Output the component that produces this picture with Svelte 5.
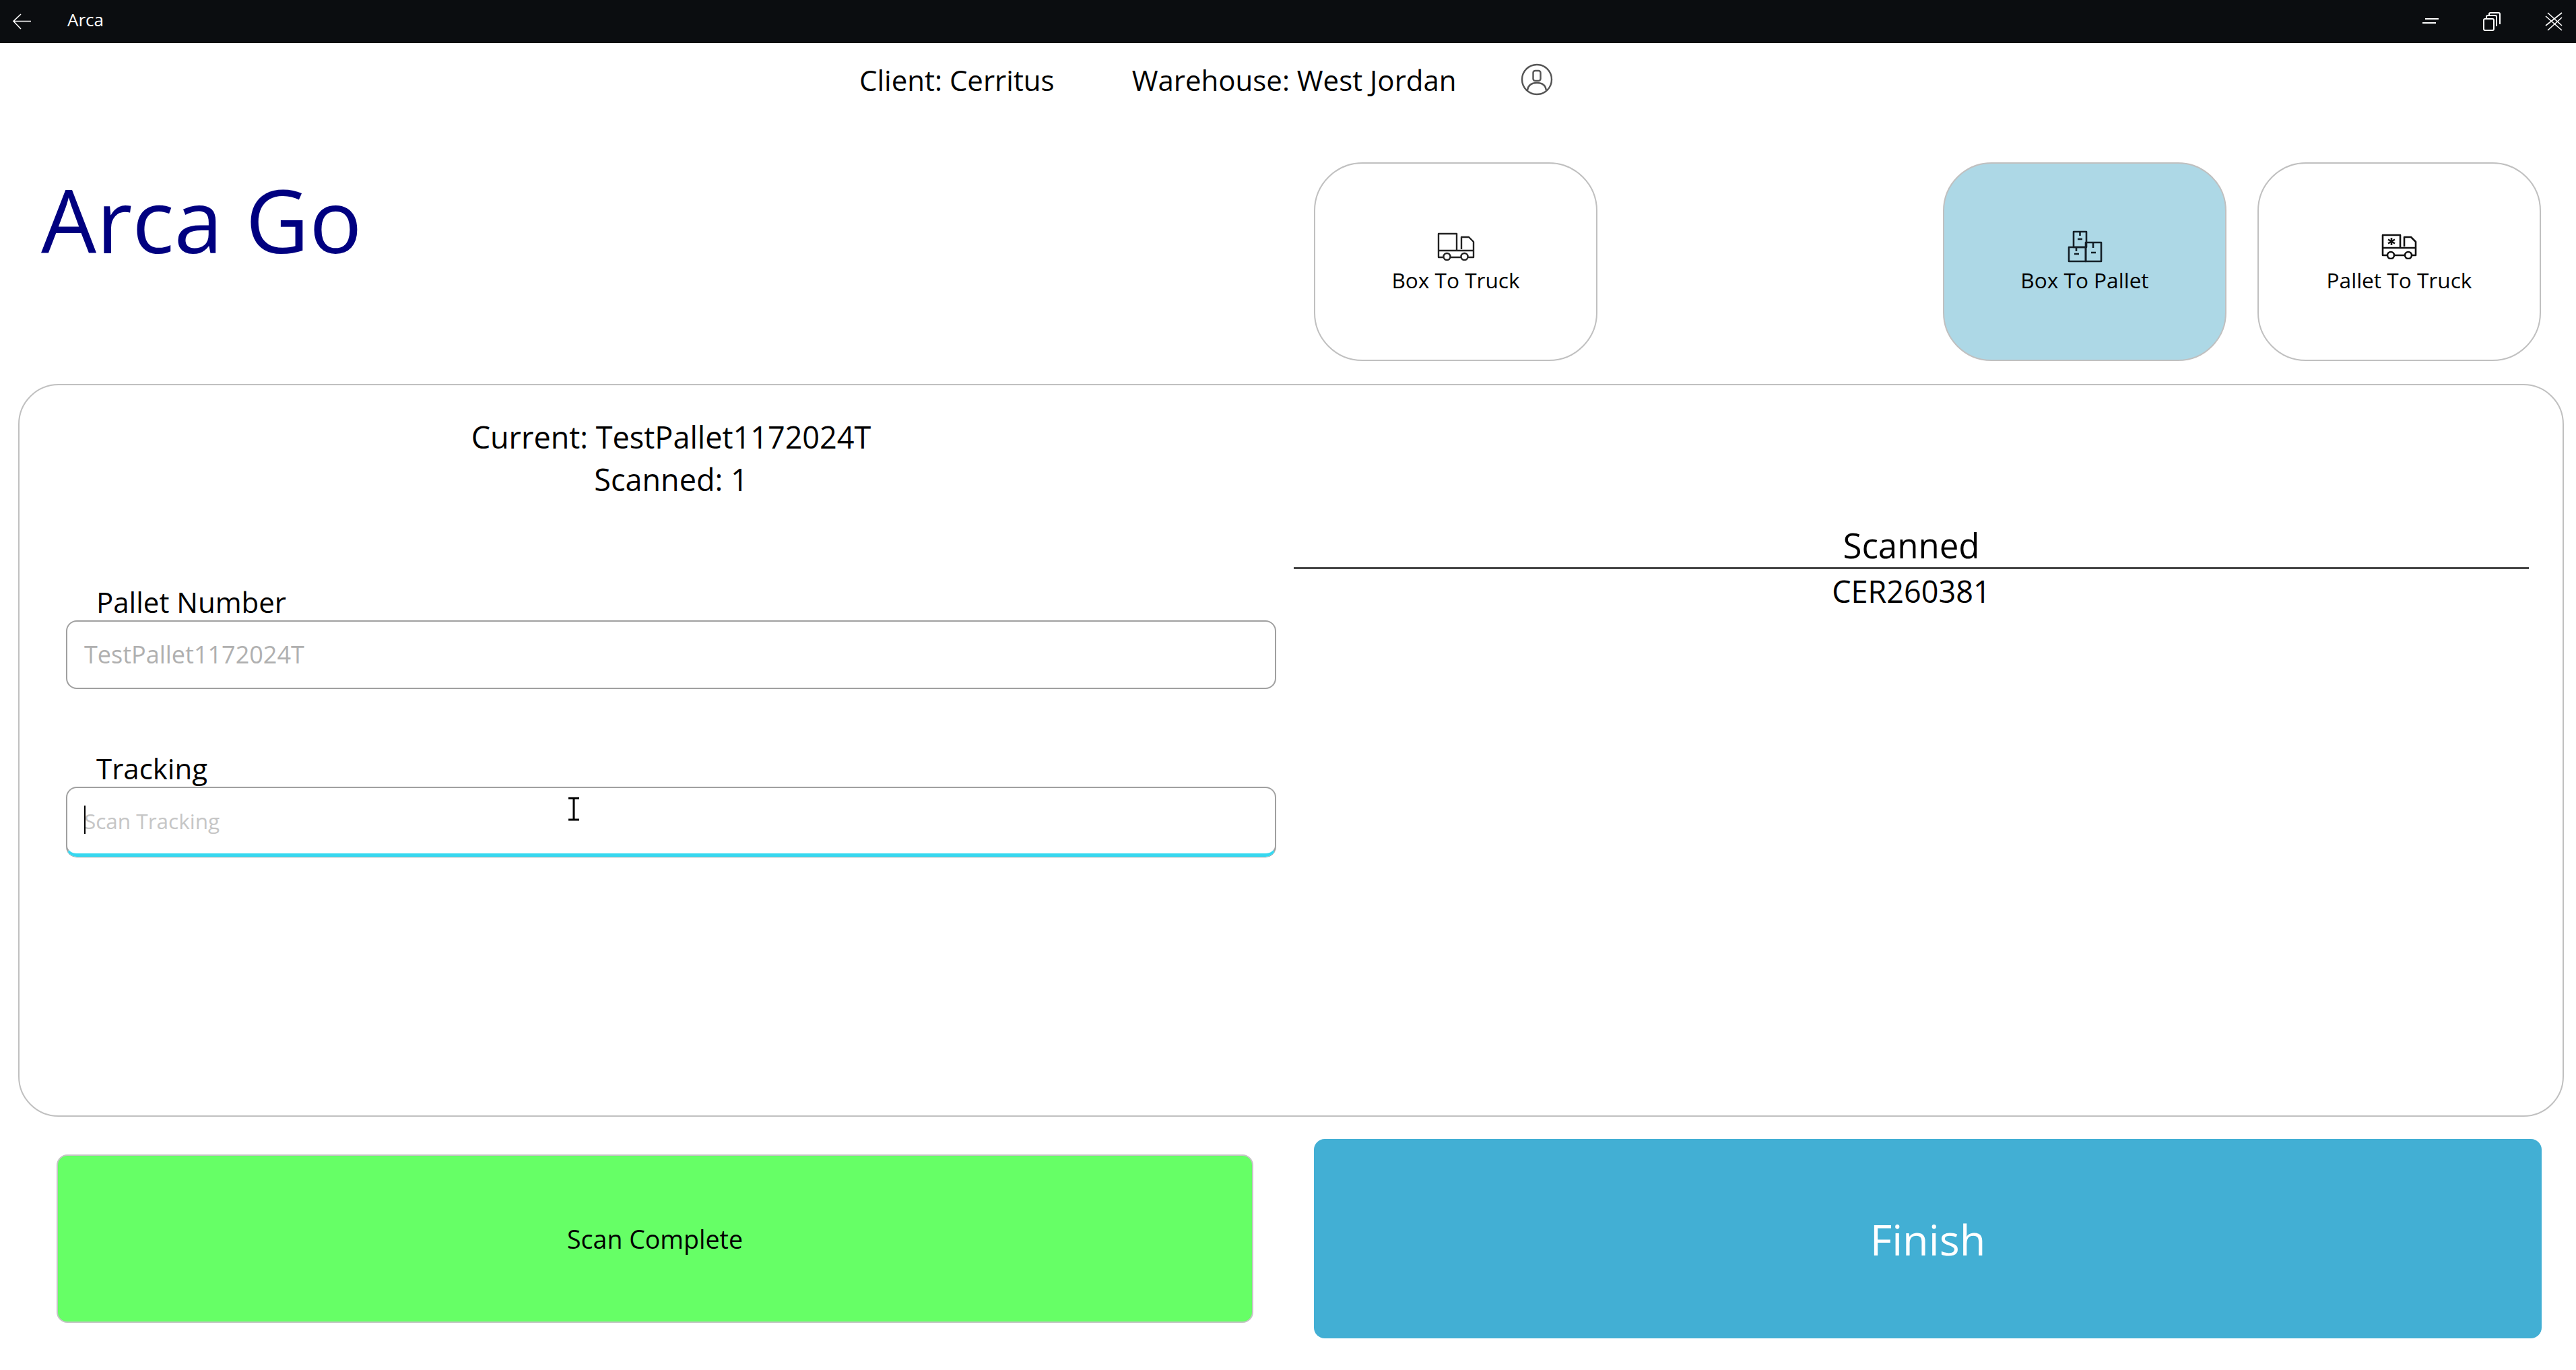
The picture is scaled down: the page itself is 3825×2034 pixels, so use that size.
<script lang="ts">
  let pallet = "TestPallet1172024T";
  let scanned = ["CER260381"];
</script>

<div class="app">
  <div class="titlebar">
    <svg class="back" width="28" height="24" viewBox="0 0 28 24" fill="none" stroke="#fff" stroke-width="1.6">
      <path d="M1 11.500h26M12 1 1 11.500 12 23" />
    </svg>
    <span class="app-name">Arca</span>
    <div class="win-controls">
      <svg width="24" height="12" viewBox="0 0 24 12" stroke="#fff" stroke-width="2">
        <path d="M4 2h20M0 8h20" />
      </svg>
      <svg width="26" height="28" viewBox="0 0 26 28" fill="none" stroke="#fff" stroke-width="2">
        <rect x="1" y="10" width="15" height="17" rx="2" />
        <path d="M5 9V7q0-2 2-2h11q2 0 2 2v14M9 4V3q0-2 2-2h12q2 0 2 2v15" />
      </svg>
      <svg width="26" height="28" viewBox="0 0 26 28" stroke="#fff" stroke-width="2">
        <path d="M1 20 25 1M1 6l24 21M4 27 25 8M4 1l21 19" stroke-width="1.6" />
      </svg>
    </div>
  </div>

  <div class="info-row">
    <span class="client">Client: Cerritus</span>
    <span class="warehouse">Warehouse: West Jordan</span>
    <svg class="user" width="48" height="48" viewBox="0 0 48 48" fill="none" stroke="#555" stroke-width="2.4">
      <circle cx="24" cy="24" r="22" />
      <rect x="18.500" y="11" width="11" height="15" rx="3" />
      <path d="M10 40c1-7 6-11 14-11s13 4 14 11" />
    </svg>
  </div>

  <div class="mode-row">
    <h1>Arca Go</h1>
    <button class="mode">
      <span class="icon-slot">
        <svg width="56" height="42" viewBox="0 0 56 42" fill="none" stroke="#222" stroke-width="2.4" stroke-linejoin="round">
          <path d="M2 27V2h27v25M36 25V7h11l7 7v13M2 27h52M2 27v10h7M20 37h15M46 37h8V27" />
          <circle cx="14.500" cy="36" r="5" />
          <circle cx="40.500" cy="36" r="5" />
        </svg>
      </span>
      Box To Truck
    </button>
    <div></div>
    <button class="mode active">
      <span class="icon-slot">
        <svg width="52" height="48" viewBox="0 0 52 48" fill="none" stroke="#152028" stroke-width="2.6" stroke-linejoin="round">
          <rect x="9" y="2" width="19" height="23" />
          <rect x="2" y="25" width="25" height="21" />
          <rect x="27" y="18" width="23" height="28" />
          <path d="M18.500 2v6M15 13h7M13 25v6M10 35h7M38 18v8M35 33h7" />
        </svg>
      </span>
      Box To Pallet
    </button>
    <button class="mode">
      <span class="icon-slot">
        <svg width="54" height="38" viewBox="0 0 54 38" fill="none" stroke="#111" stroke-width="2.6" stroke-linejoin="round">
          <path d="M2 21V2h26v19M34 19V5h10l7 7v9M2 21h49M2 21v11h6M20 32h14M46 32h5V21" />
          <path d="M15 6v11M10 8.500l10 6M20 8.500l-10 6" />
          <circle cx="14" cy="32" r="5" />
          <circle cx="40" cy="32" r="5" />
        </svg>
      </span>
      Pallet To Truck
    </button>
  </div>

  <div class="panel">
    <div class="left">
      <div class="status">
        <div>Current: {pallet}</div>
        <div>Scanned: {scanned.length}</div>
      </div>
      <div class="field">
        <span class="label">Pallet Number</span>
        <div class="input">{pallet}</div>
      </div>
      <div class="field second">
        <span class="label">Tracking</span>
        <div class="input focused"><i class="caret"></i>Scan Tracking
          <svg class="ibeam" width="20" height="36" viewBox="0 0 20 36" fill="none" stroke="#000" stroke-width="3">
            <path d="M2 2h16M2 34h16M10 2v32" />
          </svg>
        </div>
      </div>
    </div>
    <div class="right">
      <div class="list-head">Scanned</div>
      {#each scanned as code}
        <div class="list-item">{code}</div>
      {/each}
    </div>
  </div>

  <div class="actions">
    <button class="complete">Scan Complete</button>
    <button class="finish">Finish</button>
  </div>
</div>

<style>
  :global(body) {
    margin: 0;
    background: #fff;
  }
  .app {
    width: 3825px;
    height: 2034px;
    overflow: hidden;
    font-family: "Open Sans", sans-serif;
    color: #000;
    display: flex;
    flex-direction: column;
  }
  .titlebar {
    height: 64px;
    background: #0b0d10;
    color: #fff;
    display: flex;
    align-items: center;
    padding-left: 19px;
    flex-shrink: 0;
  }
  .back {
    margin-right: 53px;
  }
  .app-name {
    font-size: 26px;
    margin-top: -6px;
  }
  .win-controls {
    margin-left: auto;
    margin-right: 20px;
    display: flex;
    align-items: center;
    gap: 66px;
  }
  .info-row {
    height: 108px;
    display: flex;
    align-items: center;
    padding-left: 1276px;
    font-size: 42px;
    flex-shrink: 0;
  }
  .client {
    margin-right: 115px;
  }
  .warehouse {
    margin-right: 95px;
  }
  .mode-row {
    display: grid;
    grid-template-columns: 421px 421px 421px 421px;
    column-gap: 46px;
    padding-left: 1951px;
    height: 295px;
    margin-top: 69px;
    position: relative;
    flex-shrink: 0;
  }
  h1 {
    position: absolute;
    left: 61px;
    top: -4px;
    margin: 0;
    font-size: 130px;
    font-weight: 400;
    line-height: 178px;
    color: #000080;
  }
  .mode {
    height: 295px;
    border: 2px solid #c0c0c0;
    border-radius: 72px;
    background: #fff;
    font: inherit;
    font-size: 31.600px;
    color: #000;
    display: flex;
    flex-direction: column;
    align-items: center;
    justify-content: center;
    gap: 3px;
    padding: 0;
  }
  .mode.active {
    background: #add8e6;
  }
  .icon-slot {
    height: 50px;
    display: flex;
    align-items: center;
  }
  .panel {
    margin: 34px 18px 0 27px;
    height: 1088px;
    box-sizing: border-box;
    border: 2px solid #c0c0c0;
    border-radius: 60px;
    display: grid;
    grid-template-columns: 1866px 1fr;
    flex-shrink: 0;
  }
  .left {
    padding: 45px 0 0 69px;
    width: 1797px;
    box-sizing: content-box;
  }
  .status {
    text-align: center;
    font-size: 45px;
    line-height: 63px;
    margin-bottom: 124px;
  }
  .field {
    display: flex;
    flex-direction: column;
  }
  .field.second {
    margin-top: 91px;
  }
  .label {
    font-size: 42px;
    line-height: 54px;
    padding-left: 45px;
  }
  .input {
    position: relative;
    height: 102px;
    box-sizing: border-box;
    border: 2px solid #a0a0a0;
    border-radius: 16px;
    font-size: 36px;
    color: #b0b0b0;
    display: flex;
    align-items: center;
    padding-left: 25px;
    padding-bottom: 2px;
  }
  .input.focused {
    height: 104px;
    border-bottom: 5px solid #36d8f0;
    box-shadow: 0 1px 0 #8aa4aa;
    color: #c6c6c6;
    font-size: 31.500px;
    padding-bottom: 0;
  }
  .caret {
    position: absolute;
    left: 25px;
    top: 26px;
    width: 2px;
    height: 42px;
    background: #000;
  }
  .ibeam {
    position: absolute;
    left: 742px;
    top: 13px;
  }
  .right {
    padding: 204px 50px 0 26px;
  }
  .list-head {
    font-size: 51px;
    line-height: 66px;
    text-align: center;
    border-bottom: 3px solid #444;
  }
  .list-item {
    font-size: 45px;
    line-height: 66px;
    text-align: center;
  }
  .actions {
    display: grid;
    grid-template-columns: 1777px 1823px;
    column-gap: 90px;
    padding-left: 84px;
    margin-top: 33px;
    align-items: center;
    height: 296px;
    flex-shrink: 0;
  }
  .actions button {
    font: inherit;
    padding: 0;
    border-radius: 16px;
  }
  .complete {
    height: 250px;
    background: #66ff66;
    border: 2px solid #c4c4c4;
    font-size: 37.500px !important;
    color: #000;
  }
  .finish {
    height: 296px;
    background: #42afd4;
    border: none;
    font-size: 63px !important;
    color: #fff;
  }
</style>
